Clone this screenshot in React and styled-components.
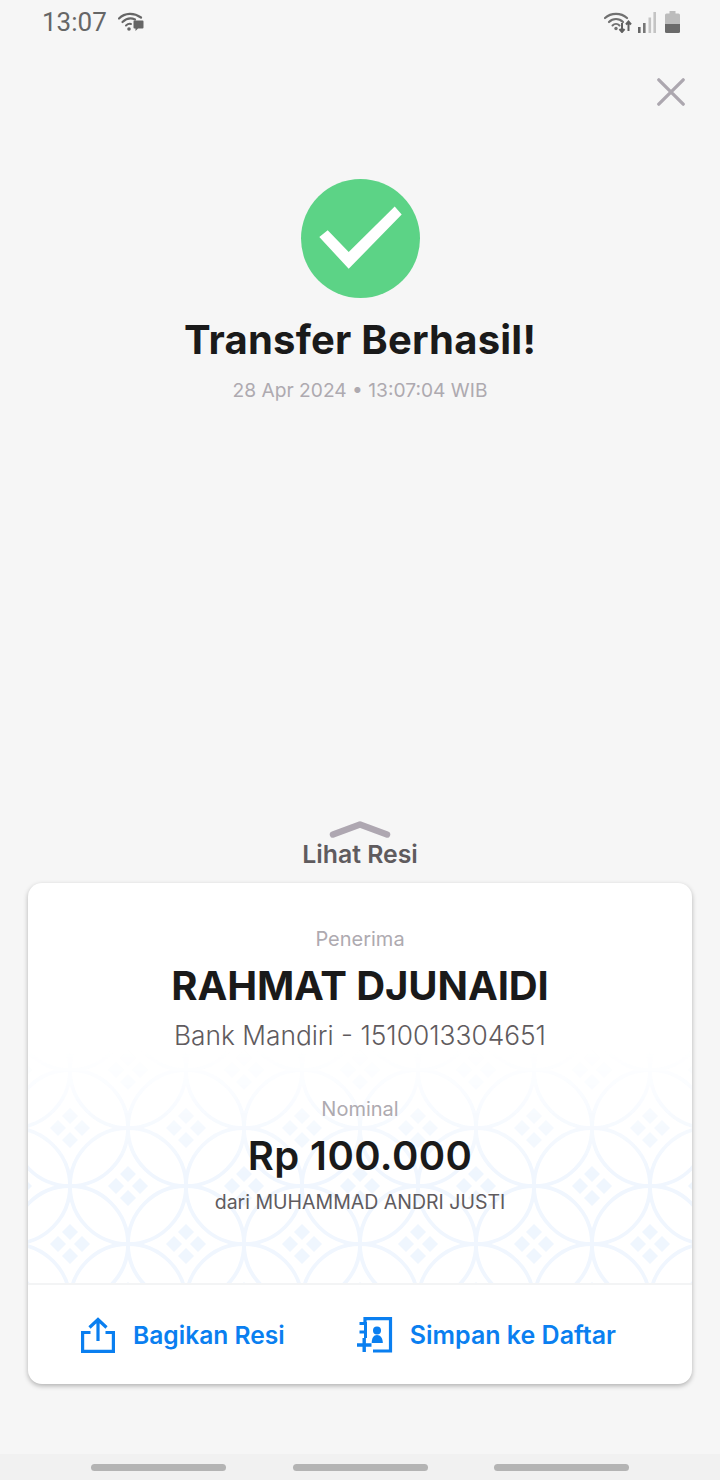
import React from "react";
import styled, { createGlobalStyle } from "styled-components";

const Global = createGlobalStyle`
  html, body { margin: 0; padding: 0; background: #f6f6f6; }
  * { box-sizing: border-box; }
`;

const Screen = styled.div`
  width: 720px;
  height: 1480px;
  display: flex;
  flex-direction: column;
  background: #f6f6f6;
  font-family: Inter, "Liberation Sans", sans-serif;
  overflow: hidden;
`;

const StatusBar = styled.div`
  height: 44px;
  padding: 0 40px 0 42px;
  display: flex;
  align-items: center;
  justify-content: space-between;
  color: #666;
`;

const StatusGroup = styled.div`
  display: flex;
  align-items: center;
  gap: ${(p) => p.$gap}px;
`;

const Time = styled.span`
  font-family: Roboto, sans-serif;
  font-size: 26px;
  line-height: 44px;
  color: #666;
`;

const CloseRow = styled.div`
  display: flex;
  justify-content: flex-end;
  padding: 34px 35px 0 0;
  height: 135px;
`;

const Hero = styled.div`
  display: flex;
  flex-direction: column;
  align-items: center;
`;

const Badge = styled.svg`
  margin-left: 1px;
  display: block;
`;

const Title = styled.h1`
  margin: 17px 0 0;
  font-size: 40px;
  letter-spacing: 0.22px;
  line-height: 48px;
  font-weight: 700;
  color: #1a1a1a;
`;

const DateLine = styled.div`
  margin-top: 14px;
  font-size: 19.2px;
  line-height: 24px;
  font-weight: 400;
  color: #aeaab0;
`;

const Bottom = styled.div`
  margin-top: auto;
  padding: 0 28px 70px;
  display: flex;
  flex-direction: column;
  align-items: center;
`;

const Peek = styled.div`
  display: flex;
  flex-direction: column;
  align-items: center;
  margin-bottom: 14px;
`;

const PeekLabel = styled.div`
  font-size: 24.8px;
  line-height: 30px;
  font-weight: 600;
  color: #5f5b5e;
`;

const Card = styled.div`
  width: 664px;
  height: 501px;
  background: #fff;
  border-radius: 14px;
  box-shadow: 0 2px 5px rgba(0, 0, 0, 0.28);
  display: flex;
  flex-direction: column;
  overflow: hidden;
`;

const CardBody = styled.div`
  position: relative;
  height: 402px;
  padding-top: 43px;
  display: flex;
  flex-direction: column;
  align-items: center;
  border-bottom: 2px solid #f3f4f5;
`;

const Pattern = styled.svg`
  position: absolute;
  left: 0;
  bottom: 0;
  width: 664px;
  height: 240px;
`;

const Line = styled.div`
  position: relative;
  text-align: center;
  color: ${(p) => p.$color};
  font-size: ${(p) => p.$size}px;
  font-weight: ${(p) => p.$weight};
  line-height: ${(p) => p.$lh}px;
  letter-spacing: ${(p) => p.$track || 0}px;
  margin-top: ${(p) => p.$top || 0}px;
  white-space: nowrap;
`;

const Footer = styled.div`
  flex: 1;
  display: flex;
  align-items: center;
  padding: 1px 0 0 53px;
`;

const Action = styled.div`
  display: flex;
  align-items: center;
  gap: ${(p) => p.$gap}px;
  margin-right: ${(p) => p.$right || 0}px;
  color: #0a7ff0;
  font-size: ${(p) => p.$size}px;
  font-weight: 600;
  line-height: 30px;
  white-space: nowrap;
`;

const NavBar = styled.div`
  height: 26px;
  background: #f1f1f1;
  display: flex;
  justify-content: center;
  gap: 66.5px;
  padding-top: 10px;
`;

const NavPill = styled.div`
  width: 135px;
  height: 7px;
  border-radius: 4px;
  background: #b4b4b4;
`;

const WifiBubble = () => (
  <svg width="26" height="20" viewBox="0 0 26 20" fill="none">
    <path d="M1 6.500C7 0.500 16 0.500 23 5.500" stroke="#666" strokeWidth="2.200" strokeLinecap="round" />
    <path d="M4.500 10C8.500 6.200 13.500 5.800 17 7.500" stroke="#666" strokeWidth="2.200" strokeLinecap="round" />
    <path d="M8 13.500c1.800-1.600 3.200-1.900 5-1.500" stroke="#666" strokeWidth="2" strokeLinecap="round" />
    <circle cx="11" cy="17" r="1.800" fill="#666" />
    <path d="M16.500 8.500h8a1 1 0 0 1 1 1v6a1 1 0 0 1-1 1h-4.500l-2.500 2.500v-2.500h-1a1 1 0 0 1-1-1v-6a1 1 0 0 1 1-1z" fill="#666" />
  </svg>
);

const WifiArrows = () => (
  <svg width="28" height="22" viewBox="0 0 28 22" fill="none">
    <path d="M1 7C7 1.500 17 1.500 23 7" stroke="#707070" strokeWidth="2.200" strokeLinecap="round" />
    <path d="M5 11C9 7 15 7 19 11" stroke="#707070" strokeWidth="2.200" strokeLinecap="round" />
    <path d="M8.500 14.500c2-2 5-2 7 0" stroke="#707070" strokeWidth="2" strokeLinecap="round" />
    <circle cx="12" cy="17.500" r="1.700" fill="#707070" />
    <path d="M18 12v9M15.500 18l2.500 3 2.500-3" stroke="#606060" strokeWidth="2" />
    <path d="M24.500 20v-9M22 13.500l2.500-3 2.500 3" stroke="#606060" strokeWidth="2" />
  </svg>
);

const Signal = () => (
  <svg width="18" height="21" viewBox="0 0 18 21">
    <rect x="0" y="15" width="2.600" height="6" fill="#666" />
    <rect x="5" y="11" width="2.600" height="10" fill="#777" />
    <rect x="10.500" y="5.500" width="2.600" height="15.500" fill="#c4c4c4" />
    <rect x="15.400" y="0" width="2.600" height="21" fill="#c4c4c4" />
  </svg>
);

const Battery = () => (
  <svg width="15" height="22" viewBox="0 0 15 22">
    <path d="M4.500 0h6v2.500h3a1.500 1.500 0 0 1 1.500 1.500v9H0V4a1.500 1.500 0 0 1 1.500-1.500h3z" fill="#bcbcbc" />
    <path d="M0 13h15v7.500a1.500 1.500 0 0 1-1.500 1.500h-12A1.500 1.500 0 0 1 0 20.500z" fill="#6a6a6a" />
  </svg>
);

const CloseIcon = () => (
  <svg width="28" height="28" viewBox="0 0 28 28" fill="none">
    <path d="M1.800 1.800l24.400 24.400M26.200 1.800L1.800 26.200" stroke="#aca7af" strokeWidth="3.300" strokeLinecap="round" />
  </svg>
);

const CheckBadge = () => (
  <Badge width="119" height="120" viewBox="0 0 119 120">
    <circle cx="59.500" cy="59.500" r="59.500" fill="#5cd386" />
    <path d="M18.300 58L26.700 51.300L47.700 73L93.700 27.500L100.700 35.500L47.700 89.800z" fill="#fff" />
  </Badge>
);

const Chevron = () => (
  <svg width="62" height="18" viewBox="0 0 62 18" fill="none">
    <path d="M4 13.500L31 3.500l27 10" stroke="#aea7b1" strokeWidth="6.500" strokeLinecap="round" strokeLinejoin="round" />
  </svg>
);

const ShareIcon = () => (
  <svg width="34" height="36" viewBox="0 0 34 36" fill="none" stroke="#0a7ff0" strokeWidth="3.200">
    <path d="M9.500 15.500H1.600v18.800h30.800V15.500h-7.900" />
    <path d="M17 24V3M8.500 10.500L17 2.500l8.500 8" />
  </svg>
);

const ContactIcon = () => (
  <svg width="36" height="36" viewBox="0 0 36 36" fill="none">
    <path d="M8 7V1.600H33.500V34H16" stroke="#0a7ff0" strokeWidth="3.200" />
    <path d="M2.500 6.500H8.500V21M2.500 15H8.500" stroke="#0a7ff0" strokeWidth="3" />
    <path d="M0 28h14.500M7.200 21v14" stroke="#0a7ff0" strokeWidth="3.400" />
    <circle cx="20" cy="13.500" r="4" fill="#0a7ff0" />
    <path d="M14.700 26c0-5 1.800-8 5.300-8s5.800 3 5.800 8z" fill="#0a7ff0" />
  </svg>
);

const Diamonds = ({ x, y }) => (
  <g fill="#eff6fe" transform={`translate(${x} ${y})`}>
    <path d="M0 -20l8 8-8 8-8-8z" />
    <path d="M0 20l8-8-8-8-8 8z" />
    <path d="M-20 0l8-8 8 8-8 8z" />
    <path d="M20 0l-8-8-8 8 8 8z" />
  </g>
);

const Batik = () => (
  <Pattern viewBox="0 0 664 240">
    <defs>
      <pattern id="batik" width="116" height="116" patternUnits="userSpaceOnUse" patternTransform="translate(42 -31)">
        <g fill="none" stroke="#f0f6fe" strokeWidth="3.800">
          <circle cx="0" cy="0" r="58" />
          <circle cx="116" cy="0" r="58" />
          <circle cx="0" cy="116" r="58" />
          <circle cx="116" cy="116" r="58" />
          <circle cx="58" cy="58" r="58" />
        </g>
        <Diamonds x={0} y={0} />
        <Diamonds x={116} y={0} />
        <Diamonds x={0} y={116} />
        <Diamonds x={116} y={116} />
        <Diamonds x={58} y={58} />
      </pattern>
      <linearGradient id="fade" x1="0" y1="0" x2="0" y2="1">
        <stop offset="0.03" stopColor="#fff" stopOpacity="0" />
        <stop offset="0.55" stopColor="#fff" stopOpacity="1" />
      </linearGradient>
      <mask id="fadeMask">
        <rect width="664" height="240" fill="url(#fade)" />
      </mask>
    </defs>
    <rect width="664" height="240" fill="url(#batik)" mask="url(#fadeMask)" />
  </Pattern>
);

export default function App() {
  return (
    <Screen>
      <Global />
      <StatusBar>
        <StatusGroup $gap={11}>
          <Time>13:07</Time>
          <WifiBubble />
        </StatusGroup>
        <StatusGroup $gap={9}>
          <StatusGroup $gap={6}>
            <WifiArrows />
            <Signal />
          </StatusGroup>
          <Battery />
        </StatusGroup>
      </StatusBar>
      <CloseRow>
        <CloseIcon />
      </CloseRow>
      <Hero>
        <CheckBadge />
        <Title>Transfer Berhasil!</Title>
        <DateLine>28 Apr 2024 • 13:07:04 WIB</DateLine>
      </Hero>
      <Bottom>
        <Peek>
          <Chevron />
          <PeekLabel>Lihat Resi</PeekLabel>
        </Peek>
        <Card>
          <CardBody>
            <Batik />
            <Line $color="#aeaab0" $size={20} $weight={400} $lh={26}>Penerima</Line>
            <Line $color="#1a1a1a" $size={40} $weight={700} $lh={48} $top={10} $track={-0.1}>RAHMAT DJUNAIDI</Line>
            <Line $color="#5f5b5e" $size={26.3} $weight={300} $lh={34} $top={9}>Bank Mandiri - 1510013304651</Line>
            <Line $color="#aeaab0" $size={20} $weight={400} $lh={26} $top={43}>Nominal</Line>
            <Line $color="#1a1a1a" $size={40} $weight={600} $lh={48} $top={10} $track={0.4}>Rp 100.000</Line>
            <Line $color="#5f5b5e" $size={19.5} $weight={400} $lh={26} $top={9}>dari MUHAMMAD ANDRI JUSTI</Line>
          </CardBody>
          <Footer>
            <Action $gap={18} $right={72} $size={24.6}>
              <ShareIcon />
              Bagikan Resi
            </Action>
            <Action $gap={17} $size={25}>
              <ContactIcon />
              Simpan ke Daftar
            </Action>
          </Footer>
        </Card>
      </Bottom>
      <NavBar>
        <NavPill />
        <NavPill />
        <NavPill />
      </NavBar>
    </Screen>
  );
}
